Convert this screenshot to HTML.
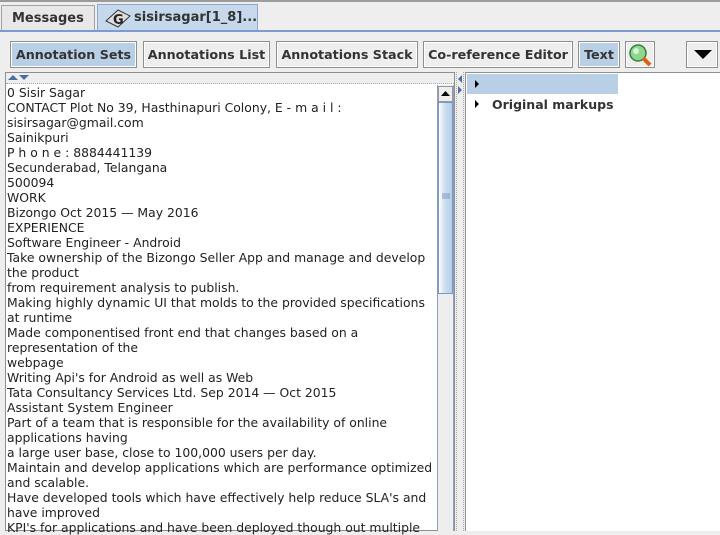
<!DOCTYPE html>
<html><head><meta charset="utf-8"><style>
*{margin:0;padding:0;box-sizing:border-box}
body{width:720px;height:531px;overflow:hidden;background:#eeeeee;font-family:"DejaVu Sans","Liberation Sans",sans-serif;position:relative}
.a{position:absolute}
.tab{position:absolute;top:5px;height:26px;border:1px solid #a3a3a3;border-bottom:none;font-weight:bold;font-size:13px;color:#333;padding-top:5px}
.btn{position:absolute;top:41px;height:27px;border:1px solid #8f8f8f;background:#eee;font-weight:bold;font-size:12.7px;color:#333;text-align:center;line-height:26px;box-shadow:inset 0 0 0 1px #fff}
.sel{background:#b8cfe5}
.txt{font-size:12.4px;line-height:15px;color:#222;white-space:pre}
</style></head><body>
<div class="a" style="left:0;top:0;width:720px;height:2px;background:#9c9c9c"></div>
<div class="tab" style="left:1px;width:94px;background:#e8e8e8;padding-left:10px">Messages</div>
<div class="tab" style="left:97px;width:161px;height:27px;top:4px;background:#c6d9ec;border-color:#8fa9cf;padding-left:36px">sisirsagar[1_8]...</div>
<svg class="a" style="left:104px;top:7px" width="28" height="22"><polygon points="2,14 14,3 26,9 14,20" fill="#ddd" stroke="#333"/><text x="9" y="17" font-size="13" font-weight="bold" fill="#222" font-family="DejaVu Sans">G</text></svg>
<div class="a" style="left:0;top:30px;width:720px;height:2px;background:#7d9bd0"></div>
<div class="a" style="left:0;top:32px;width:720px;height:499px;background:#eeeeee"></div>
<div class="btn sel" style="left:10px;width:127px">Annotation Sets</div>
<div class="btn" style="left:143px;width:127px">Annotations List</div>
<div class="btn" style="left:276px;width:142px">Annotations Stack</div>
<div class="btn" style="left:423px;width:150px">Co-reference Editor</div>
<div class="btn sel" style="left:578px;width:42px">Text</div>
<div class="btn" style="left:625px;width:30px"></div>
<svg class="a" style="left:627px;top:43px" width="26" height="24"><circle cx="11" cy="10" r="8" fill="#8ed88e" stroke="#3a7a3a" stroke-width="1.5"/><circle cx="9" cy="8" r="3" fill="#d6f4d6"/><line x1="16" y1="15" x2="23" y2="22" stroke="#e06010" stroke-width="4"/></svg>
<div class="btn" style="left:686px;width:32px"></div>
<svg class="a" style="left:692px;top:48px" width="22" height="14"><polygon points="2,2 20,2 11,11" fill="#000"/></svg>
<div class="a" style="left:5px;top:72px;width:450px;height:459px;background:#fff;border:1px solid #8f8f8f"></div>
<div class="a" style="left:6px;top:73px;width:448px;height:11px;background:#eee;border-bottom:1px dotted #aaa"></div>
<svg class="a" style="left:8px;top:74px" width="22" height="8"><polygon points="0,6 5,1 10,6" fill="#4a6fa8"/><polygon points="11,1 21,1 16,6" fill="#4a6fa8"/></svg>
<div class="a txt" style="left:7px;top:85px">0 Sisir Sagar
CONTACT Plot No 39, Hasthinapuri Colony, E - m a i l :
sisirsagar@gmail.com
Sainikpuri
P h o n e : 8884441139
Secunderabad, Telangana
500094
WORK
Bizongo Oct 2015 — May 2016
EXPERIENCE
Software Engineer - Android
Take ownership of the Bizongo Seller App and manage and develop
the product
from requirement analysis to publish.
Making highly dynamic UI that molds to the provided specifications
at runtime
Made componentised front end that changes based on a
representation of the
webpage
Writing Api's for Android as well as Web
Tata Consultancy Services Ltd. Sep 2014 — Oct 2015
Assistant System Engineer
Part of a team that is responsible for the availability of online
applications having
a large user base, close to 100,000 users per day.
Maintain and develop applications which are performance optimized
and scalable.
Have developed tools which have effectively help reduce SLA's and
have improved
KPI's for applications and have been deployed though out multiple</div>
<div class="a" style="left:437px;top:85px;width:17px;height:446px;background:#eee;border-left:1px solid #8aa0c0;border-right:1px solid #8aa0c0"></div>
<div class="a" style="left:438px;top:86px;width:15px;height:16px;background:#eee;border:1px solid #999"></div>
<svg class="a" style="left:440px;top:90px" width="11" height="8"><polygon points="1,6 5.5,1 10,6" fill="#000"/></svg>
<div class="a" style="left:438px;top:102px;width:15px;height:192px;background:linear-gradient(90deg,#fff,#cfe0f0 40%,#b5cde6);border:1px solid #7a97c0"></div>
<svg class="a" style="left:442px;top:193px" width="8" height="6"><path d="M0 1H8M0 3H8M0 5H8" stroke="#7a97c0"/></svg>
<div class="a" style="left:456px;top:72px;width:8px;height:459px;border-left:1px dotted #aaa;border-right:1px dotted #aaa"></div>
<svg class="a" style="left:457px;top:74px" width="6" height="22"><polygon points="5,1 1,5 5,9" fill="#4a6fa8"/><polygon points="1,12 5,16 1,20" fill="#4a6fa8"/></svg>
<div class="a" style="left:465px;top:72px;width:255px;height:459px;background:#fff;border-left:1px solid #8f8f8f;border-top:1px solid #8f8f8f"></div>
<div class="a" style="left:467px;top:74px;width:151px;height:20px;background:#b8cfe5"></div>
<svg class="a" style="left:474px;top:79px" width="6" height="10"><polygon points="1,1 5,5 1,9" fill="#000"/></svg>
<svg class="a" style="left:474px;top:99px" width="6" height="10"><polygon points="1,1 5,5 1,9" fill="#000"/></svg>
<div class="a" style="left:492px;top:97px;font-weight:bold;font-size:12.5px;color:#333">Original markups</div>
</body></html>
